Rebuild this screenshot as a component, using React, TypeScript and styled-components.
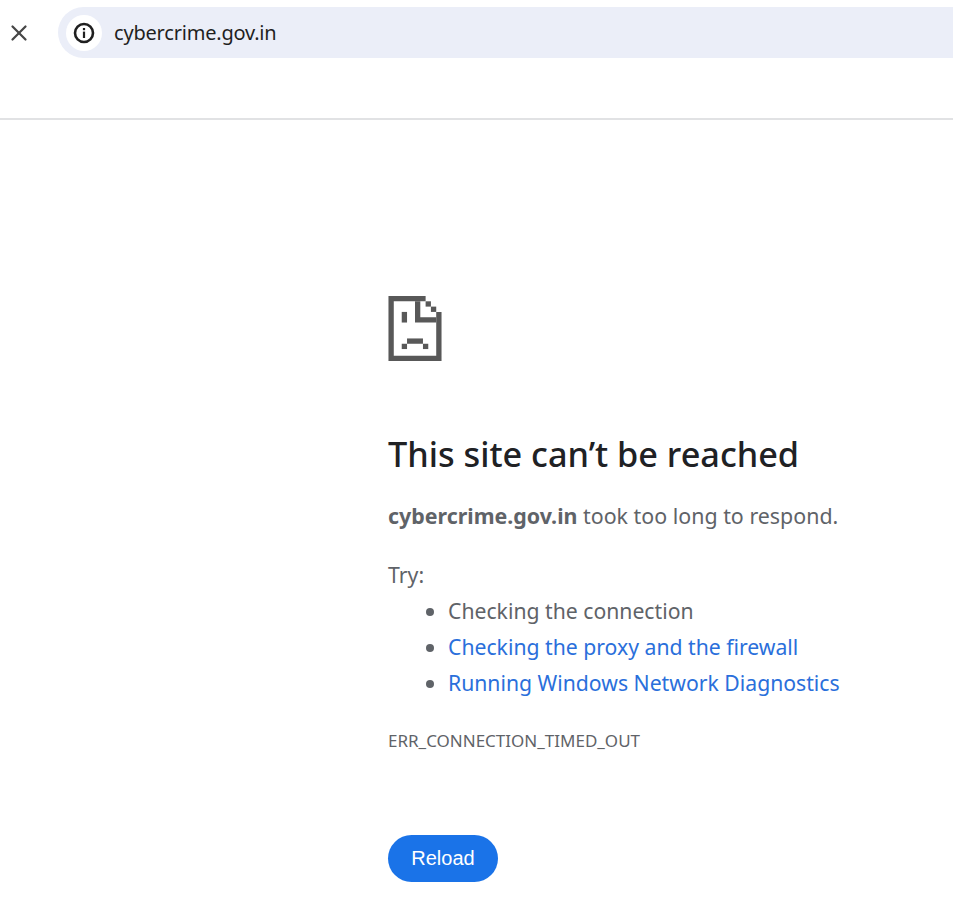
import styled, { createGlobalStyle } from "styled-components"
import { X } from "lucide-react"

const Globalstyle = createGlobalStyle`
  html, body {
    margin: 0;
    padding: 0;
    background: #fff;
    overflow: hidden;
  }
  body {
    font-family: "Noto Sans", "Open Sans", sans-serif;
  }
`

function InfoIcon() {
  return (
    <svg width="22" height="22" viewBox="0 0 22 22" fill="none">
      <circle cx="11" cy="11" r="9" stroke="#1f1f1f" strokeWidth="2.6" />
      <rect x="9.9" y="9.6" width="2.2" height="6.4" fill="#1f1f1f" />
      <rect x="9.9" y="6" width="2.2" height="2.2" fill="#1f1f1f" />
    </svg>
  )
}

function SadTab() {
  return (
    <svg width="54" height="65" viewBox="0 0 160 196" fill="#585858">
      <path d="M0 0H112V16H16V180H144V48H160V196H0Z" />
      <path d="M80 16H96V64H144V80H80Z" />
      <rect x="112" y="16" width="16" height="16" />
      <rect x="128" y="32" width="16" height="16" />
      <rect x="40" y="48" width="16" height="32" />
      <rect x="56" y="128" width="48" height="16" />
      <rect x="40" y="144" width="16" height="16" />
      <rect x="104" y="144" width="16" height="16" />
    </svg>
  )
}

function App() {
  return (
    <Page>
      <Globalstyle />
      <Toolbar>
        <CloseButton>
          <X size={26} strokeWidth={2.1} color="#474747" />
        </CloseButton>
        <Omnibox>
          <IconChip>
            <InfoIcon />
          </IconChip>
          <Address>cybercrime.gov.in</Address>
        </Omnibox>
      </Toolbar>
      <Main>
        <IconWrap>
          <SadTab />
        </IconWrap>
        <Title>This site can’t be reached</Title>
        <Summary>
          <strong>cybercrime.gov.in</strong> took too long to respond.
        </Summary>
        <TryLabel>Try:</TryLabel>
        <Suggestions>
          <li>Checking the connection</li>
          <li>
            <SuggestionLink href="#">Checking the proxy and the firewall</SuggestionLink>
          </li>
          <li>
            <SuggestionLink href="#">Running Windows Network Diagnostics</SuggestionLink>
          </li>
        </Suggestions>
        <ErrorCode>ERR_CONNECTION_TIMED_OUT</ErrorCode>
        <ReloadButton>Reload</ReloadButton>
      </Main>
    </Page>
  )
}

export default App

const Page = styled.div`
  width: 953px;
  height: 917px;
  overflow: hidden;
  background: #fff;
`

const Toolbar = styled.header`
  height: 118px;
  box-sizing: content-box;
  border-bottom: 2px solid #e1e2e4;
  display: flex;
  align-items: flex-start;
`

const CloseButton = styled.div`
  width: 38px;
  height: 66px;
  flex: none;
  display: flex;
  align-items: center;
  justify-content: center;
`

const Omnibox = styled.div`
  margin-top: 7px;
  margin-left: 20px;
  flex: 1;
  height: 51px;
  background: #ebeef8;
  border-radius: 26px 0 0 26px;
  display: flex;
  align-items: center;
  padding-left: 8px;
`

const IconChip = styled.div`
  width: 36px;
  height: 36px;
  border-radius: 50%;
  background: #fff;
  display: flex;
  align-items: center;
  justify-content: center;
  flex: none;
`

const Address = styled.div`
  margin-left: 12px;
  font-size: 20px;
  color: #1f1f1f;
  letter-spacing: -0.2px;
`

const Main = styled.main`
  padding: 176px 0 0 388px;
  color: #5f6368;
`

const IconWrap = styled.div`
  height: 65px;
  line-height: 0;
`

const Title = styled.h1`
  margin: 71px 0 0;
  font-size: 34.25px;
  line-height: 44px;
  font-weight: 500;
  color: #202124;
  white-space: nowrap;
`

const Summary = styled.p`
  margin: 25px 0 0;
  font-size: 21.4px;
  line-height: 30px;
  white-space: nowrap;

  strong {
    font-weight: 700;
  }
`

const TryLabel = styled.p`
  margin: 29px 0 0;
  font-size: 21.3px;
  line-height: 30px;
`

const Suggestions = styled.ul`
  margin: 3px 0 0;
  padding: 0 0 0 60px;
  font-size: 21.2px;
  line-height: 36px;
  white-space: nowrap;
`

const SuggestionLink = styled.a`
  color: #2a6fdb;
  text-decoration: none;
`

const ErrorCode = styled.div`
  margin-top: 29px;
  font-size: 17px;
  line-height: 22px;
`

const ReloadButton = styled.button`
  display: block;
  margin-top: 83px;
  width: 110px;
  height: 47px;
  padding: 0;
  border: none;
  border-radius: 24px;
  background: #1a73e8;
  color: #fff;
  font-family: "Liberation Sans", Arial, sans-serif;
  font-size: 20px;
  cursor: pointer;
`
